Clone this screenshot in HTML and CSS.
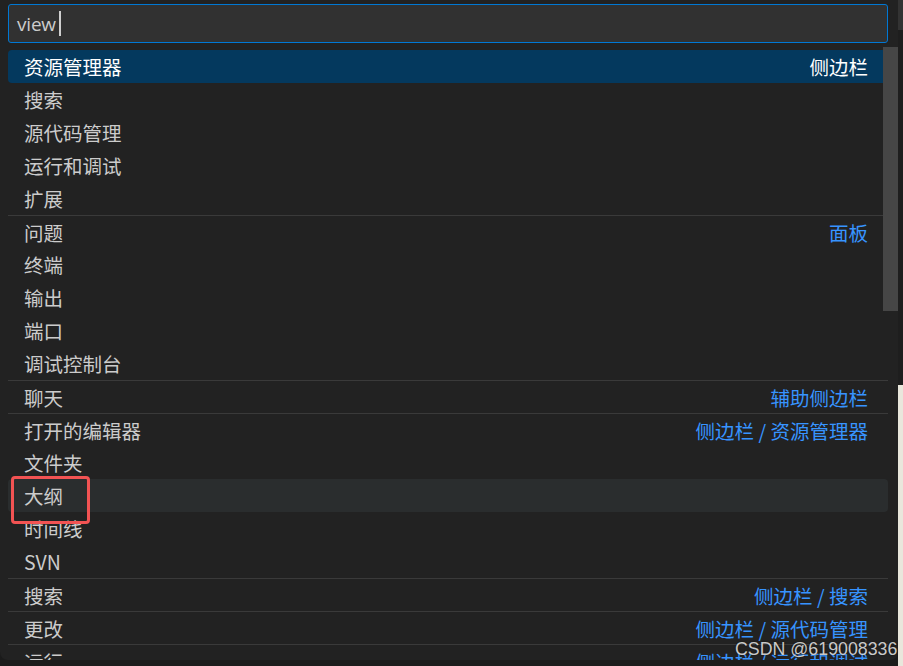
FILE: index.html
```html
<!DOCTYPE html>
<html lang="zh-CN">
<head>
<meta charset="utf-8">
<title>快速打开视图</title>
<link rel="stylesheet" href="styles.css">
</head>
<body>
<div class="workbench">
  <div class="quick-input">
    <div class="input-box">
      <span class="input-value">view</span><span class="caret"></span>
    </div>
    <div class="list">
      <div class="row selected"><span class="label">资源管理器</span><span class="detail">侧边栏</span></div>
      <div class="row"><span class="label">搜索</span></div>
      <div class="row"><span class="label">源代码管理</span></div>
      <div class="row"><span class="label">运行和调试</span></div>
      <div class="row"><span class="label">扩展</span></div>
      <div class="row sep"><span class="label">问题</span><span class="detail">面板</span></div>
      <div class="row"><span class="label">终端</span></div>
      <div class="row"><span class="label">输出</span></div>
      <div class="row"><span class="label">端口</span></div>
      <div class="row"><span class="label">调试控制台</span></div>
      <div class="row sep"><span class="label">聊天</span><span class="detail">辅助侧边栏</span></div>
      <div class="row sep"><span class="label">打开的编辑器</span><span class="detail">侧边栏 / 资源管理器</span></div>
      <div class="row"><span class="label">文件夹</span></div>
      <div class="row hover"><span class="label">大纲</span></div>
      <div class="row"><span class="label">时间线</span></div>
      <div class="row"><span class="label">SVN</span></div>
      <div class="row sep"><span class="label">搜索</span><span class="detail">侧边栏 / 搜索</span></div>
      <div class="row sep"><span class="label">更改</span><span class="detail">侧边栏 / 源代码管理</span></div>
      <div class="row sep"><span class="label">运行</span><span class="detail">侧边栏 / 运行和调试</span></div>
    </div>
    <div class="scrollbar"></div>
    <div class="mark-box"></div>
  </div>
  <div class="editor-edge">
    <div class="edge-dark"></div>
    <div class="edge-light"></div>
  </div>
</div>
<div class="watermark">CSDN @619008336</div>
</body>
</html>
```

FILE: styles.css
```css
html, body {
  margin: 0;
  padding: 0;
}

body {
  width: 903px;
  height: 666px;
  overflow: hidden;
  background: #1b1b1b;
  position: relative;
  font-family: "Noto Sans", "Noto Sans CJK SC", sans-serif;
}

.workbench {
  display: flex;
  height: 666px;
}

.quick-input {
  position: relative;
  width: 898px;
  height: 660px;
  flex: none;
  background: #222222;
  border-radius: 0 0 8px 8px;
  overflow: hidden;
  padding-top: 4px;
  box-sizing: border-box;
}

.input-box {
  margin-left: 8px;
  width: 880px;
  height: 39px;
  box-sizing: border-box;
  border: 1px solid #0078d4;
  border-radius: 3px;
  background: #313131;
  display: flex;
  align-items: center;
  padding-left: 8px;
}

.input-value {
  color: #cccccc;
  font-family: "Open Sans", "Noto Sans", sans-serif;
  font-size: 19px;
  line-height: 26px;
  letter-spacing: -0.2px;
}

.caret {
  width: 2px;
  height: 25px;
  margin-left: 3px;
  background: #cfcfcf;
}

.list {
  margin: 7px 0 0 8px;
  width: 880px;
}

.row {
  height: 33px;
  box-sizing: border-box;
  display: flex;
  align-items: center;
  justify-content: space-between;
  padding: 0 20px 0 16px;
  border-radius: 4px;
  font-family: "Noto Sans CJK SC", "Noto Sans", sans-serif;
  font-size: 19.5px;
  line-height: 26px;
  color: #cccccc;
}

.row.sep {
  border-top: 1px solid #3a3a3a;
  border-radius: 0;
  padding-top: 1px;
}

.row.selected {
  background: #04395e;
  color: #ffffff;
}

.row.hover {
  background: #2a2d2e;
}

.detail {
  color: #3794ff;
}

.row.selected .detail {
  color: #ffffff;
}

/* scrollbar thumb floats over the list */
.scrollbar {
  position: absolute;
  top: 47px;
  right: 0;
  width: 15px;
  height: 264px;
  background: #464646;
}

/* red annotation frame around the hovered entry */
.mark-box {
  position: absolute;
  left: 11px;
  top: 476px;
  width: 79px;
  height: 48px;
  box-sizing: border-box;
  border: 3px solid #f25353;
  border-radius: 4px;
}

.editor-edge {
  flex: 1;
  display: flex;
  flex-direction: column;
}

.edge-dark {
  height: 385px;
  background: #1e1e1e;
  border-top: 30px solid #333333;
  box-sizing: border-box;
}

.edge-light {
  flex: 1;
  background: #e9e7dc;
}

.watermark {
  position: absolute;
  left: 735px;
  top: 638px;
  font-family: "Liberation Sans", "Noto Sans", sans-serif;
  font-size: 17.8px;
  line-height: 22px;
  color: rgba(235, 235, 235, 0.85);
  text-shadow: 0 0 2px rgba(0, 0, 0, 0.6);
  white-space: nowrap;
}
```
